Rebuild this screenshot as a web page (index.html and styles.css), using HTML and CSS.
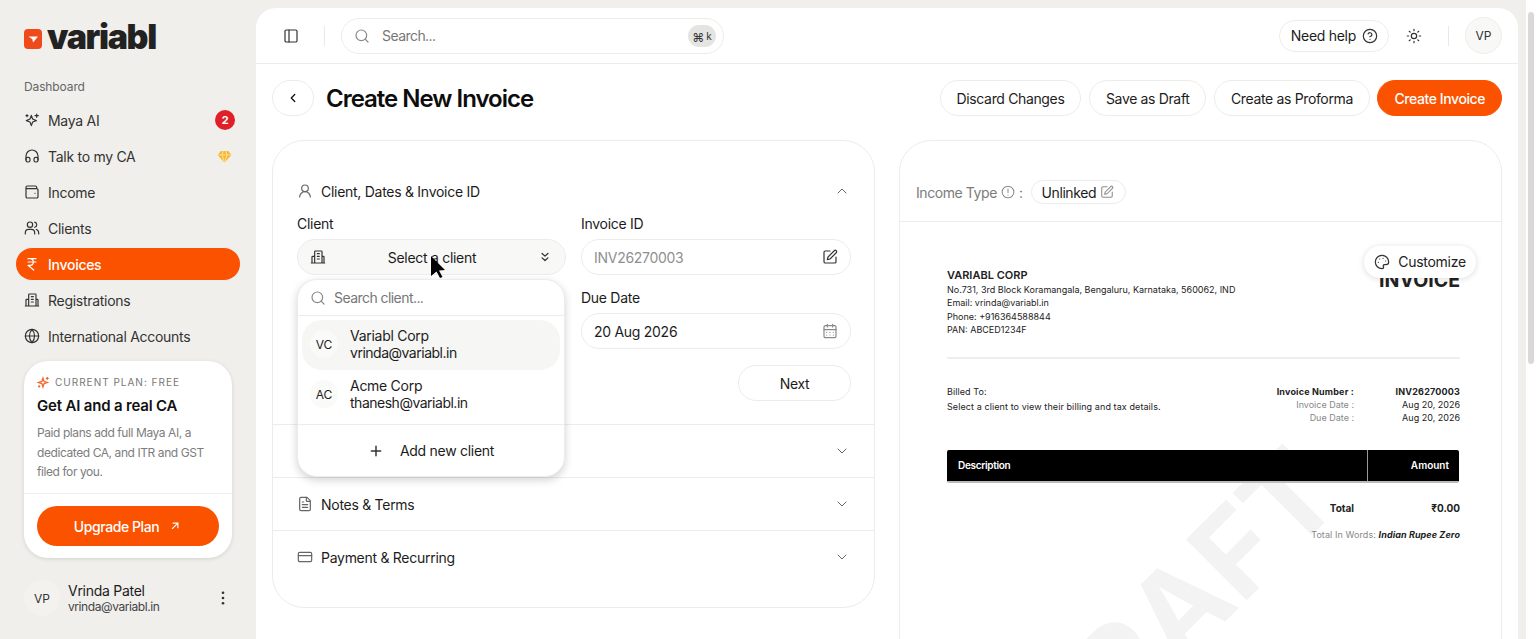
FILE: index.html
```html
<!DOCTYPE html>
<html lang="en">
<head>
  <meta charset="UTF-8">
  <meta name="viewport" content="width=device-width, initial-scale=1.0">
  <title>Create New Invoice - variabl</title>
  <link rel="stylesheet" href="styles.css">
</head>
<body>
  <div class="app">
    <aside class="sidebar">
      <div class="logo">
        <span class="logo-mark"><svg viewBox="0 0 18 20" width="18" height="20"><path d="M4.500 7.500h9.500L9 13.500l-.6-3.200z" fill="#fff"/></svg></span>
        <span class="logo-text">variabl</span>
      </div>
      <div class="nav-label">Dashboard</div>
      <nav class="nav">
        <a class="nav-item">
          <svg class="ico" viewBox="0 0 24 24"><path d="M11 5l2 5.500L18.500 13 13 15l-2 5.500-2-5.500L3.500 13 9 10.500z"/><path d="M19 3v5M16.500 5.500h5M4.500 4v3M3 5.500h3"/></svg>
          <span>Maya AI</span><span class="count">2</span>
        </a>
        <a class="nav-item">
          <svg class="ico" viewBox="0 0 24 24"><path d="M3 18v-6a9 9 0 0 1 18 0v6"/><rect x="3" y="14" width="6" height="7" rx="2.500"/><rect x="15" y="14" width="6" height="7" rx="2.500"/></svg>
          <span>Talk to my CA</span>
          <svg class="gem" viewBox="0 0 24 24"><path d="M6 3h12l5 6.500L12 22 1 9.500z" fill="#f7b733"/><path d="M1 9.500h22M8 9.500L12 22l4-12.500M8 9.500L10 3M16 9.500L14 3" stroke="#fde3a0" stroke-width="1.500" fill="none"/></svg>
        </a>
        <a class="nav-item">
          <svg class="ico" viewBox="0 0 24 24"><path d="M19 7V5a2 2 0 0 0-2-2H5a2 2 0 0 0-2 2v14a2 2 0 0 0 2 2h14a2 2 0 0 0 2-2V9a2 2 0 0 0-2-2H3"/><path d="M16.500 14h.01"/></svg>
          <span>Income</span>
        </a>
        <a class="nav-item">
          <svg class="ico" viewBox="0 0 24 24"><circle cx="9" cy="7" r="4"/><path d="M2 21v-2a5 5 0 0 1 5-5h4a5 5 0 0 1 5 5v2"/><path d="M16 3.100a4 4 0 0 1 0 7.800M22 21v-2a5 5 0 0 0-3.500-4.800"/></svg>
          <span>Clients</span>
        </a>
        <a class="nav-item active">
          <svg class="ico" viewBox="0 0 24 24"><path d="M6 4h12M6 9h12M6 4h3a5 5 0 0 1 0 10H6l8.500 7"/></svg>
          <span>Invoices</span>
        </a>
        <a class="nav-item">
          <svg class="ico" viewBox="0 0 24 24"><path d="M7 21V4a1 1 0 0 1 1-1h9a1 1 0 0 1 1 1v17M7 11H4a1 1 0 0 0-1 1v9M18 11h2a1 1 0 0 1 1 1v9M2 21h20M11 7h3M11 11h3M11 15h3"/></svg>
          <span>Registrations</span>
        </a>
        <a class="nav-item">
          <svg class="ico" viewBox="0 0 24 24"><circle cx="12" cy="12" r="10"/><path d="M2 12h20M12 2a15 15 0 0 1 0 20M12 2a15 15 0 0 0 0 20"/></svg>
          <span>International Accounts</span>
        </a>
      </nav>
      <div class="plan-card">
        <div class="plan-top">
          <div class="plan-tag">
            <svg viewBox="0 0 24 24" width="13" height="13"><path d="M11 4l2 6 6 2-6 2-2 6-2-6-6-2 6-2z" fill="none" stroke="#f0682c" stroke-width="2.400"/><path d="M19 2v5M16.500 4.500h5M4 17v4M2 19h4" stroke="#f0682c" stroke-width="2.400"/></svg>
            CURRENT PLAN: FREE
          </div>
          <h3>Get AI and a real CA</h3>
          <p>Paid plans add full Maya AI, a dedicated CA, and ITR and GST filed for you.</p>
        </div>
        <div class="plan-bottom">
          <button class="upgrade">Upgrade Plan
            <svg viewBox="0 0 24 24" width="14" height="14"><path d="M7 17L17 7M8 7h9v9" fill="none" stroke="#fff" stroke-width="2"/></svg>
          </button>
        </div>
      </div>
      <div class="user-row">
        <div class="avatar">VP</div>
        <div class="user-info">
          <div class="user-name">Vrinda Patel</div>
          <div class="user-mail">vrinda@variabl.in</div>
        </div>
        <svg class="dots" viewBox="0 0 4 16" width="4" height="14"><circle cx="2" cy="2" r="1.500"/><circle cx="2" cy="8" r="1.500"/><circle cx="2" cy="14" r="1.500"/></svg>
      </div>
    </aside>

    <main class="panel">
      <header class="topbar">
        <svg class="ico toggle" viewBox="0 0 24 24"><rect x="3" y="3" width="18" height="18" rx="2"/><path d="M9 3v18"/></svg>
        <span class="vline first"></span>
        <div class="searchbar">
          <svg class="ico grey" viewBox="0 0 24 24"><circle cx="11" cy="11" r="8"/><path d="M21 21l-4.300-4.300"/></svg>
          <span class="search-text">Search...</span>
          <span class="kbd">⌘<small>k</small></span>
        </div>
        <div class="top-right">
          <button class="help">Need help
            <svg class="ico" viewBox="0 0 24 24"><circle cx="12" cy="12" r="10"/><path d="M9.100 9a3 3 0 0 1 5.800 1c0 2-3 3-3 3M12 17h.01"/></svg>
          </button>
          <svg class="ico sun" viewBox="0 0 24 24"><circle cx="12" cy="12" r="4"/><path d="M12 2v2M12 20v2M4.900 4.900l1.400 1.400M17.700 17.700l1.400 1.400M2 12h2M20 12h2M4.900 19.100l1.400-1.400M17.700 6.300l1.400-1.400"/></svg>
          <span class="vline"></span>
          <div class="avatar top-avatar">VP</div>
        </div>
      </header>

      <div class="content">
        <div class="title-row">
          <button class="back"><svg class="ico small" viewBox="0 0 24 24"><path d="M15 6l-6 6 6 6"/></svg></button>
          <h1>Create New Invoice</h1>
          <div class="actions">
            <button class="btn">Discard Changes</button>
            <button class="btn">Save as Draft</button>
            <button class="btn">Create as Proforma</button>
            <button class="btn primary">Create Invoice</button>
          </div>
        </div>

        <div class="columns">
          <section class="card form-card">
            <div class="acc open">
              <div class="acc-head">
                <svg class="ico acc-ico" viewBox="0 0 24 24"><circle cx="12" cy="8" r="5"/><path d="M20 21a8 8 0 0 0-16 0"/></svg>
                <span>Client, Dates &amp; Invoice ID</span>
                <svg class="ico chev" viewBox="0 0 24 24"><path d="M18 15l-6-6-6 6"/></svg>
              </div>
              <div class="form-grid">
                <div class="field">
                  <label>Client</label>
                  <div class="select">
                    <svg class="ico" viewBox="0 0 24 24"><path d="M7 21V4a1 1 0 0 1 1-1h9a1 1 0 0 1 1 1v17M7 11H4a1 1 0 0 0-1 1v9M18 11h2a1 1 0 0 1 1 1v9M2 21h20M11 7h3M11 11h3M11 15h3"/></svg>
                    <span>Select a client</span>
                    <svg class="ico small dbl" viewBox="0 0 24 24"><path d="M7 6l5 4.500L17 6M7 13.500l5 4.500 5-4.500"/></svg>
                  </div>
                </div>
                <div class="field">
                  <label>Invoice ID</label>
                  <div class="input">
                    <span class="muted">INV26270003</span>
                    <svg class="ico" viewBox="0 0 24 24"><path d="M12 3H5a2 2 0 0 0-2 2v14a2 2 0 0 0 2 2h14a2 2 0 0 0 2-2v-7"/><path d="M18.400 2.600a2.100 2.100 0 0 1 3 3L12 15l-4 1 1-4z"/></svg>
                  </div>
                </div>
                <div class="field second">
                  <label>Due Date</label>
                  <div class="input">
                    <span>20 Aug 2026</span>
                    <svg class="ico grey" viewBox="0 0 24 24"><rect x="3" y="4" width="18" height="18" rx="2"/><path d="M3 10h18M8 2v4M16 2v4M7 14h.01M12 14h.01M17 14h.01M7 18h.01M12 18h.01M17 18h.01"/></svg>
                  </div>
                </div>
              </div>
              <div class="next-row"><button class="btn next">Next</button></div>

              <div class="dropdown">
                <div class="dd-search">
                  <svg class="ico grey" viewBox="0 0 24 24"><circle cx="11" cy="11" r="8"/><path d="M21 21l-4.300-4.300"/></svg>
                  <span>Search client...</span>
                </div>
                <div class="dd-list">
                  <div class="dd-item hover">
                    <div class="dd-avatar">VC</div>
                    <div><div>Variabl Corp</div><div class="dd-mail">vrinda@variabl.in</div></div>
                  </div>
                  <div class="dd-item">
                    <div class="dd-avatar">AC</div>
                    <div><div>Acme Corp</div><div class="dd-mail">thanesh@variabl.in</div></div>
                  </div>
                </div>
                <div class="dd-add">
                  <svg class="ico plus" viewBox="0 0 24 24"><path d="M5 12h14M12 5v14"/></svg>
                  <span>Add new client</span>
                </div>
              </div>
            </div>
            <div class="acc">
              <div class="acc-head">
                <svg class="ico chev" viewBox="0 0 24 24"><path d="M6 9l6 6 6-6"/></svg>
              </div>
            </div>
            <div class="acc">
              <div class="acc-head">
                <svg class="ico acc-ico" viewBox="0 0 24 24"><path d="M15 2H6a2 2 0 0 0-2 2v16a2 2 0 0 0 2 2h12a2 2 0 0 0 2-2V7z"/><path d="M14 2v5a1 1 0 0 0 1 1h5M10 9H8M16 13H8M16 17H8"/></svg>
                <span>Notes &amp; Terms</span>
                <svg class="ico chev" viewBox="0 0 24 24"><path d="M6 9l6 6 6-6"/></svg>
              </div>
            </div>
            <div class="acc">
              <div class="acc-head">
                <svg class="ico acc-ico" viewBox="0 0 24 24"><rect x="2" y="5" width="20" height="14" rx="2"/><path d="M2 10h20"/></svg>
                <span>Payment &amp; Recurring</span>
                <svg class="ico chev" viewBox="0 0 24 24"><path d="M6 9l6 6 6-6"/></svg>
              </div>
            </div>
          </section>

          <section class="card preview-card">
            <div class="income-row">
              <span class="income-label">Income Type</span>
              <svg class="ico small grey" viewBox="0 0 24 24"><circle cx="12" cy="12" r="10"/><path d="M12 7v6M12 17h.01"/></svg>
              <span class="income-label">:</span>
              <span class="chip">Unlinked
                <svg class="ico small grey" viewBox="0 0 24 24"><path d="M12 3H5a2 2 0 0 0-2 2v14a2 2 0 0 0 2 2h14a2 2 0 0 0 2-2v-7"/><path d="M18.400 2.600a2.100 2.100 0 0 1 3 3L12 15l-4 1 1-4z"/></svg>
              </span>
            </div>
            <div class="sheet">
              <div class="watermark">DRAFT</div>
              <button class="customize">
                <svg class="ico" viewBox="0 0 24 24"><path d="M12 22a10 10 0 1 1 10-10c0 2.800-2.200 4-4 4h-2.500a1.800 1.800 0 0 0-1.300 3c.6.800.3 3-2.200 3z"/><path d="M13.500 6.500h.01M17.500 10.500h.01M6.500 12.500h.01M8.500 7.500h.01"/></svg>
                Customize
              </button>
              <div class="inv-head">
                <div class="company">
                  <strong>VARIABL CORP</strong>
                  <div>No.731, 3rd Block Koramangala, Bengaluru, Karnataka, 560062, IND</div>
                  <div>Email: vrinda@variabl.in</div>
                  <div>Phone: +916364588844</div>
                  <div>PAN: ABCED1234F</div>
                </div>
                <div class="inv-word">INVOICE</div>
              </div>
              <div class="bill-row">
                <div class="billed">
                  <div>Billed To:</div>
                  <div>Select a client to view their billing and tax details.</div>
                </div>
                <div class="meta">
                  <div class="meta-row first"><b>Invoice Number :</b><b class="val">INV26270003</b></div>
                  <div class="meta-row"><span>Invoice Date :</span><span class="val">Aug 20, 2026</span></div>
                  <div class="meta-row"><span>Due Date :</span><span class="val">Aug 20, 2026</span></div>
                </div>
              </div>
              <div class="inv-table">
                <div class="th-desc">Description</div>
                <div class="th-amt">Amount</div>
              </div>
              <div class="total-row"><b>Total</b><b class="val">₹0.00</b></div>
              <div class="words">Total In Words: <b>Indian Rupee Zero</b></div>
            </div>
          </section>
        </div>
      </div>
    </main>

    <div class="scrollbar"><div class="thumb"></div></div>
  </div>

  <svg class="cursor" viewBox="0 0 16 22" width="16" height="22"><path d="M1 0l14 14-6 .5 3.500 6.500-2.500 1-3.500-6.500L1 20z" fill="#000"/></svg>
</body>
</html>
```

FILE: styles.css
```css
* {
  box-sizing: border-box;
}

body {
  margin: 0;
  height: 639px;
  overflow: hidden;
  background: #f0efeb;
  color: #1c1c1c;
  font-family: Inter, "Noto Sans", sans-serif;
  font-size: 14px;
  letter-spacing: -0.02em;
}

button {
  font: inherit;
  letter-spacing: inherit;
  color: inherit;
  background: #fff;
  cursor: pointer;
}

.app {
  display: flex;
  height: 639px;
}

/* icons */
.ico {
  width: 16px;
  height: 16px;
  flex: none;
  fill: none;
  stroke: #333;
  stroke-width: 1.8;
  stroke-linecap: round;
  stroke-linejoin: round;
}

.ico.small {
  width: 14px;
  height: 14px;
}

.ico.grey {
  stroke: #8a8a8a;
}

/* sidebar */
.sidebar {
  width: 256px;
  flex: none;
  padding: 0 16px;
  display: flex;
  flex-direction: column;
}

.logo {
  display: flex;
  align-items: center;
  gap: 5px;
  height: 36px;
  margin: 19px 0 0 8px;
}

.logo-mark {
  width: 18px;
  height: 20px;
  margin-top: 4px;
  border-radius: 4px;
  background: #f04a1a;
  display: flex;
}

.logo-text {
  font-size: 34px;
  font-weight: 900;
  letter-spacing: -0.04em;
  color: #222;
  line-height: 36px;
}

.nav-label {
  margin: 17px 0 0 8px;
  height: 32px;
  padding-top: 8px;
  font-size: 12px;
  line-height: 14px;
  letter-spacing: -0.01em;
  color: #666;
}

.nav {
  display: flex;
  flex-direction: column;
  gap: 4px;
}

.nav-item {
  height: 32px;
  padding: 0 8px;
  display: flex;
  align-items: center;
  gap: 8px;
  border-radius: 16px;
  color: #333;
}

.nav-item.active {
  background: #fb5200;
  color: #fff;
  font-weight: 500;
}

.nav-item.active .ico {
  stroke: #fff;
}

.count {
  margin-left: auto;
  width: 20px;
  height: 20px;
  margin-right: -3px;
  border-radius: 50%;
  background: #e02029;
  color: #fff;
  font-size: 11px;
  font-weight: 700;
  text-align: center;
  line-height: 20px;
}

.gem {
  margin-left: auto;
  width: 15px;
  height: 15px;
}

/* plan card */
.plan-card {
  margin: 9px 8px 0;
  height: 197px;
  background: #fff;
  border-radius: 24px;
  box-shadow: 0 1px 4px rgba(0, 0, 0, 0.12);
  display: flex;
  flex-direction: column;
}

.plan-top {
  padding: 14px 13px 0;
  height: 133px;
  border-bottom: 1px solid #eeeeee;
}

.plan-tag {
  display: flex;
  align-items: center;
  gap: 5px;
  font-size: 10px;
  letter-spacing: 0.1em;
  line-height: 14px;
  color: #777;
}

.plan-card h3 {
  margin: 6px 0 0;
  font-size: 15px;
  line-height: 22px;
  font-weight: 600;
  letter-spacing: -0.012em;
  color: #111;
}

.plan-card p {
  margin: 6px 0 0;
  font-size: 12px;
  line-height: 19.5px;
  letter-spacing: -0.035em;
  color: #7d7d7d;
}

.plan-bottom {
  padding: 12px 13px 0;
}

.upgrade {
  width: 100%;
  height: 40px;
  border: 0;
  border-radius: 20px;
  background: #fb5200;
  color: #fff;
  font-weight: 500;
  letter-spacing: -0.03em;
  display: flex;
  align-items: center;
  justify-content: center;
  gap: 9px;
}

.user-row {
  display: flex;
  align-items: center;
  gap: 8px;
  margin: 22px 8px 0;
}

.avatar {
  width: 36px;
  height: 36px;
  flex: none;
  border-radius: 50%;
  background: #f3f2ef;
  font-size: 12px;
  letter-spacing: 0;
  display: flex;
  align-items: center;
  justify-content: center;
  color: #333;
}

.user-info {
  padding-top: 2px;
}

.user-name {
  line-height: 16px;
}

.user-mail {
  font-size: 12px;
  line-height: 16px;
  letter-spacing: -0.035em;
  color: #444;
}

.dots {
  margin-left: auto;
  margin-right: 7px;
  fill: #333;
}

/* main panel */
.panel {
  width: 1262px;
  flex: none;
  margin-top: 8px;
  background: #fff;
  border-radius: 20px 20px 0 0;
  overflow: hidden;
  position: relative;
}

.topbar {
  height: 56px;
  border-bottom: 1px solid #ececea;
  padding: 0 16px 0 27px;
  display: flex;
  align-items: center;
}

.vline {
  width: 1px;
  height: 20px;
  background: #e8e8e6;
  margin: 0 16px;
}

.vline.first {
  margin: 0 16px 0 25px;
}

.searchbar {
  width: 383px;
  height: 36px;
  border: 1px solid #ececea;
  border-radius: 18px;
  padding: 0 7px 0 12px;
  display: flex;
  align-items: center;
  gap: 12px;
}

.search-text {
  color: #777;
  letter-spacing: -0.04em;
}

.kbd {
  margin-left: auto;
  width: 28px;
  height: 22px;
  border-radius: 11px;
  background: #e4e4e2;
  font-size: 12px;
  color: #333;
  text-align: center;
  line-height: 22px;
  letter-spacing: 0;
}

.kbd small {
  font-size: 10px;
  margin-left: 2px;
  vertical-align: 2px;
}

.top-right {
  margin-left: auto;
  display: flex;
  align-items: center;
}

.help {
  height: 32px;
  padding: 0 10px 0 11px;
  border: 1px solid #ececea;
  border-radius: 16px;
  display: flex;
  align-items: center;
  gap: 6px;
  margin-right: 17px;
}

.sun {
  margin-right: 10px;
}

.top-avatar {
  width: 37px;
  height: 37px;
  border: 1px solid #ececea;
  background: #f8f8f7;
}

/* title row */
.content {
  padding: 16px 16px 0;
}

.title-row {
  display: flex;
  align-items: center;
  gap: 12px;
  height: 36px;
}

.back {
  width: 42px;
  height: 36px;
  border: 1px solid #ececea;
  border-radius: 18px;
  padding: 0;
  display: flex;
  align-items: center;
  justify-content: center;
}

.back .ico {
  stroke: #111;
  stroke-width: 2.2;
}

h1 {
  margin: 0;
  font-size: 24px;
  font-weight: 600;
  letter-spacing: -0.042em;
  color: #0d0d0d;
}

.actions {
  margin-left: auto;
  display: flex;
  gap: 7.5px;
}

.btn {
  height: 36px;
  padding: 0 16px;
  border: 1px solid #ececea;
  border-radius: 18px;
  letter-spacing: -0.025em;
  white-space: nowrap;
}

.btn.primary {
  background: #fb5200;
  border-color: #fb5200;
  color: #fff;
  font-weight: 500;
  letter-spacing: -0.03em;
}

/* cards */
.columns {
  display: flex;
  gap: 24px;
  margin-top: 24px;
  align-items: flex-start;
}

.card {
  width: 603px;
  flex: none;
  border: 1px solid #ececea;
  border-radius: 32px;
  background: #fff;
}

.form-card {
  height: 468px;
  padding-top: 24px;
}

.acc {
  border-bottom: 1px solid #ececea;
  position: relative;
}

.acc:last-child {
  border-bottom: 0;
}

.acc-head {
  height: 52px;
  padding: 0 24px;
  display: flex;
  align-items: center;
  gap: 8px;
}

.acc-ico {
  stroke: #666;
}

.chev {
  margin-left: auto;
  stroke: #666;
  stroke-width: 1.5;
}

.form-grid {
  display: grid;
  grid-template-columns: 269px 270px;
  gap: 14px 15px;
  padding: 0 24px;
  margin-top: -2px;
}

.field label {
  display: block;
  line-height: 18px;
  height: 24px;
}

.field.second {
  grid-column: 2;
}

.select,
.input {
  height: 36px;
  border: 1px solid #ececea;
  border-radius: 18px;
  display: flex;
  align-items: center;
  justify-content: space-between;
  padding: 0 12px;
}

.select {
  background: #f8f8f6;
  padding: 0 13px 0 12px;
}

.dbl {
  stroke-width: 2.2;
}

.muted {
  color: #8f8f8f;
}

.next-row {
  display: flex;
  justify-content: flex-end;
  padding: 16px 23px 23px 24px;
}

.next {
  width: 113px;
}

/* client dropdown */
.dropdown {
  position: absolute;
  left: 24px;
  top: 114px;
  width: 268px;
  height: 198px;
  background: #fff;
  border: 1px solid #ececea;
  border-radius: 20px;
  box-shadow: 0 3px 8px rgba(0, 0, 0, 0.18);
  z-index: 3;
}

.dd-search {
  height: 36px;
  padding: 0 12px;
  display: flex;
  align-items: center;
  gap: 8px;
  border-bottom: 1px solid #ececea;
  color: #777;
  letter-spacing: -0.04em;
}

.dd-list {
  padding: 4px;
  height: 109px;
  border-bottom: 1px solid #ececea;
}

.dd-item {
  height: 50px;
  padding: 0 8px 2px;
  display: flex;
  align-items: center;
  gap: 12px;
  border-radius: 20px;
  line-height: 17px;
}

.dd-item.hover {
  background: #f6f6f4;
}

.dd-mail {
  letter-spacing: -0.035em;
}

.dd-avatar {
  width: 28px;
  height: 28px;
  flex: none;
  border-radius: 50%;
  background: #fafaf8;
  font-size: 12px;
  letter-spacing: 0;
  display: flex;
  align-items: center;
  justify-content: center;
}

.dd-add {
  height: 51px;
  display: flex;
  align-items: center;
  justify-content: center;
  gap: 16px;
}

.plus {
  stroke-width: 2.2;
}

/* preview */
.preview-card {
  height: 600px;
}

.income-row {
  height: 81px;
  padding: 22px 16px 0;
  border-bottom: 1px solid #ececea;
  display: flex;
  align-items: center;
  gap: 4px;
}

.income-label {
  color: #7c7c7c;
  letter-spacing: -0.03em;
}

.chip {
  margin-left: 4px;
  height: 24px;
  padding: 0 11px 0 10px;
  border: 1px solid #ececea;
  border-radius: 12px;
  letter-spacing: -0.03em;
  display: flex;
  align-items: center;
  gap: 4px;
}

.sheet {
  position: relative;
  padding: 46px 41px 0 47px;
  font-size: 9px;
  letter-spacing: 0;
  color: #222;
  line-height: 13.4px;
  overflow: hidden;
  height: 420px;
}

.watermark {
  position: absolute;
  left: 76px;
  top: 333px;
  width: 392px;
  text-align: center;
  white-space: nowrap;
  font-size: 118px;
  line-height: 118px;
  font-weight: 700;
  color: #f3f3f3;
  transform: rotate(-45deg);
  letter-spacing: 0;
}

.customize {
  position: absolute;
  top: 24px;
  right: 25px;
  width: 112px;
  height: 32px;
  border: 0;
  border-radius: 16px;
  background: #fff;
  box-shadow: 0 1px 6px rgba(0, 0, 0, 0.14);
  display: flex;
  align-items: center;
  justify-content: center;
  gap: 8px;
  font-size: 14px;
  letter-spacing: -0.02em;
  z-index: 2;
}

.inv-head {
  position: relative;
  display: flex;
  justify-content: space-between;
  height: 91px;
  border-bottom: 2px solid #eeeeee;
}

.company strong {
  display: block;
  font-size: 11px;
  font-weight: 600;
  line-height: 15px;
}

.inv-word {
  font-size: 19.5px;
  font-weight: 700;
  line-height: 20px;
  padding-top: 2px;
  letter-spacing: 0;
}

.bill-row {
  position: relative;
  display: flex;
  justify-content: space-between;
  margin-top: 26px;
  height: 65px;
}

.billed {
  letter-spacing: 0.01em;
}

.billed div + div {
  margin-top: 2px;
}

.meta-row {
  display: flex;
  justify-content: flex-end;
  color: #888;
  line-height: 13px;
}

.meta-row.first {
  color: #222;
  letter-spacing: 0.02em;
}

.meta-row .val {
  width: 106px;
  text-align: right;
  color: #222;
}

.inv-table {
  position: relative;
  display: flex;
  height: 33px;
  width: 512px;
  background: #000;
  border-bottom: 2px solid #bbb;
  border-radius: 2px;
  color: #fff;
  font-size: 10px;
  font-weight: 600;
  line-height: 31px;
}

.th-desc {
  width: 421px;
  padding-left: 11px;
  letter-spacing: -0.03em;
  border-right: 1px solid #999;
}

.th-amt {
  flex: 1;
  text-align: right;
  padding-right: 10px;
}

.total-row {
  position: relative;
  display: flex;
  justify-content: flex-end;
  margin-top: 19px;
  font-size: 10px;
}

.total-row .val {
  width: 106px;
  text-align: right;
}

.words {
  position: relative;
  margin-top: 13px;
  text-align: right;
  color: #888;
  letter-spacing: 0.01em;
}

.words b {
  font-style: italic;
  color: #222;
}

/* fake scrollbar */
.scrollbar {
  margin-left: 8px;
  flex: 1;
  background: #fff;
  padding: 12px 2px 0;
}

.thumb {
  height: 352px;
  border-radius: 3px;
  background: #d9d9d9;
}

.cursor {
  position: absolute;
  left: 430px;
  top: 256px;
  z-index: 9;
}
```
